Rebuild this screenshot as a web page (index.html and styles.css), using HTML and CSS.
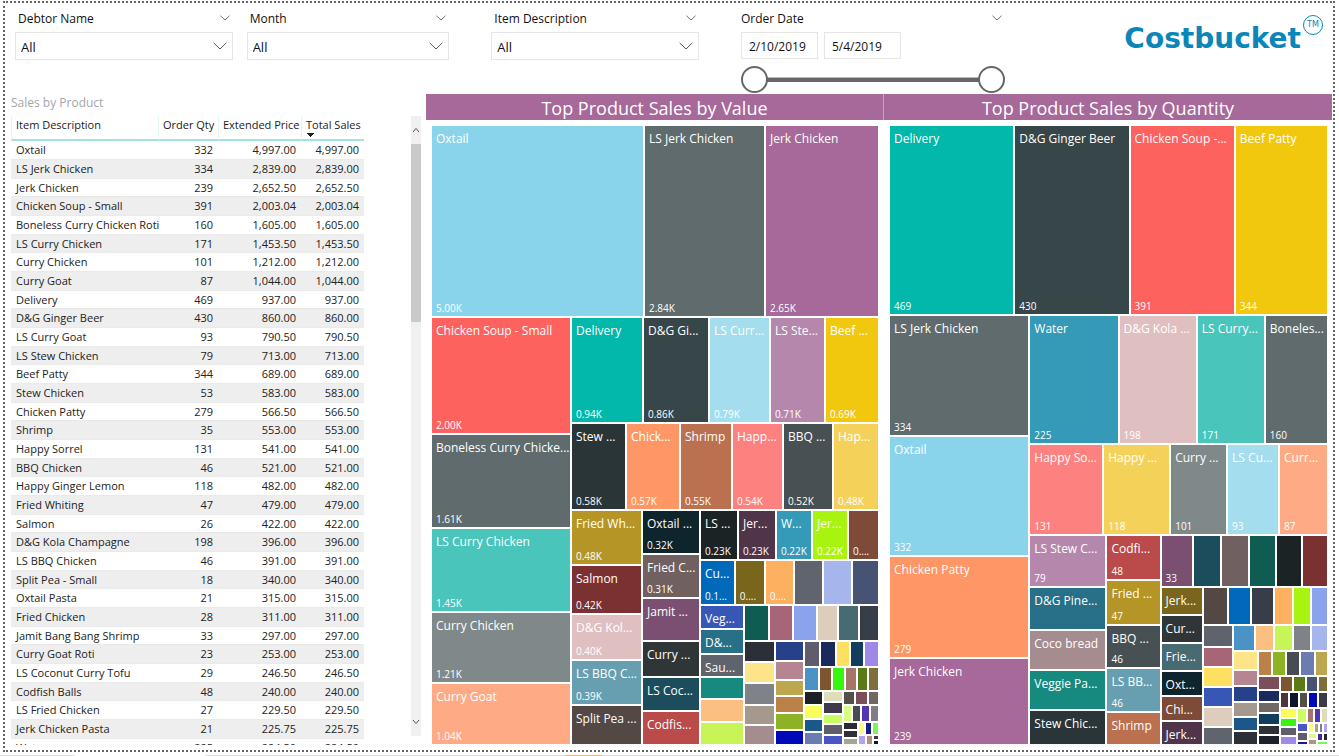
FILE: index.html
```html
<!DOCTYPE html>
<html lang="en">
<head>
<meta charset="utf-8">
<title>Costbucket Sales Report</title>
<link rel="stylesheet" href="styles.css">
</head>
<body>
<div class="report">
  <header class="filters">
    <div class="filter filter-debtor">
      <div class="filter-head"><label for="debtor">Debtor Name</label><button class="more" aria-label="Debtor Name options"><svg viewBox="0 0 10 6"><path d="M.5.8 5 5 9.500.8"/></svg></button></div>
      <div class="select"><select id="debtor"><option>All</option></select><svg viewBox="0 0 14 8"><path d="M.6.8 7 7 13.400.8"/></svg></div>
    </div>
    <div class="filter filter-month">
      <div class="filter-head"><label for="month">Month</label><button class="more" aria-label="Month options"><svg viewBox="0 0 10 6"><path d="M.5.8 5 5 9.500.8"/></svg></button></div>
      <div class="select"><select id="month"><option>All</option></select><svg viewBox="0 0 14 8"><path d="M.6.8 7 7 13.400.8"/></svg></div>
    </div>
    <div class="filter filter-item">
      <div class="filter-head"><label for="item">Item Description</label><button class="more" aria-label="Item Description options"><svg viewBox="0 0 10 6"><path d="M.5.8 5 5 9.500.8"/></svg></button></div>
      <div class="select"><select id="item"><option>All</option></select><svg viewBox="0 0 14 8"><path d="M.6.8 7 7 13.400.8"/></svg></div>
    </div>
    <div class="filter filter-date">
      <div class="filter-head"><label for="from">Order Date</label><button class="more" aria-label="Order Date options"><svg viewBox="0 0 10 6"><path d="M.5.8 5 5 9.500.8"/></svg></button></div>
      <div class="dates">
        <input id="from" type="text" value="2/10/2019">
        <input type="text" value="5/4/2019" aria-label="Order Date to">
      </div>
      <div class="range">
        <input type="range" min="0" max="100" value="0" aria-label="Range start">
        <input type="range" min="0" max="100" value="100" aria-label="Range end">
      </div>
    </div>
    <div class="brand"><span class="brand-name">Costbucket</span><span class="brand-mark">TM</span></div>
  </header>

  <main class="content">
    <section class="sales">
      <h2 class="sales-title">Sales by Product</h2>
      <div class="sales-body">
        <div class="table-clip">
          <table>
            <thead><tr><th>Item Description</th><th>Order Qty</th><th>Extended Price</th><th class="sorted">Total Sales</th></tr></thead>
            <tbody>
              <tr><td>Oxtail</td><td>332</td><td>4,997.00</td><td>4,997.00</td></tr>
              <tr><td>LS Jerk Chicken</td><td>334</td><td>2,839.00</td><td>2,839.00</td></tr>
              <tr><td>Jerk Chicken</td><td>239</td><td>2,652.50</td><td>2,652.50</td></tr>
              <tr><td>Chicken Soup - Small</td><td>391</td><td>2,003.04</td><td>2,003.04</td></tr>
              <tr><td>Boneless Curry Chicken Roti</td><td>160</td><td>1,605.00</td><td>1,605.00</td></tr>
              <tr><td>LS Curry Chicken</td><td>171</td><td>1,453.50</td><td>1,453.50</td></tr>
              <tr><td>Curry Chicken</td><td>101</td><td>1,212.00</td><td>1,212.00</td></tr>
              <tr><td>Curry Goat</td><td>87</td><td>1,044.00</td><td>1,044.00</td></tr>
              <tr><td>Delivery</td><td>469</td><td>937.00</td><td>937.00</td></tr>
              <tr><td>D&amp;G Ginger Beer</td><td>430</td><td>860.00</td><td>860.00</td></tr>
              <tr><td>LS Curry Goat</td><td>93</td><td>790.50</td><td>790.50</td></tr>
              <tr><td>LS Stew Chicken</td><td>79</td><td>713.00</td><td>713.00</td></tr>
              <tr><td>Beef Patty</td><td>344</td><td>689.00</td><td>689.00</td></tr>
              <tr><td>Stew Chicken</td><td>53</td><td>583.00</td><td>583.00</td></tr>
              <tr><td>Chicken Patty</td><td>279</td><td>566.50</td><td>566.50</td></tr>
              <tr><td>Shrimp</td><td>35</td><td>553.00</td><td>553.00</td></tr>
              <tr><td>Happy Sorrel</td><td>131</td><td>541.00</td><td>541.00</td></tr>
              <tr><td>BBQ Chicken</td><td>46</td><td>521.00</td><td>521.00</td></tr>
              <tr><td>Happy Ginger Lemon</td><td>118</td><td>482.00</td><td>482.00</td></tr>
              <tr><td>Fried Whiting</td><td>47</td><td>479.00</td><td>479.00</td></tr>
              <tr><td>Salmon</td><td>26</td><td>422.00</td><td>422.00</td></tr>
              <tr><td>D&amp;G Kola Champagne</td><td>198</td><td>396.00</td><td>396.00</td></tr>
              <tr><td>LS BBQ Chicken</td><td>46</td><td>391.00</td><td>391.00</td></tr>
              <tr><td>Split Pea - Small</td><td>18</td><td>340.00</td><td>340.00</td></tr>
              <tr><td>Oxtail Pasta</td><td>21</td><td>315.00</td><td>315.00</td></tr>
              <tr><td>Fried Chicken</td><td>28</td><td>311.00</td><td>311.00</td></tr>
              <tr><td>Jamit Bang Bang Shrimp</td><td>33</td><td>297.00</td><td>297.00</td></tr>
              <tr><td>Curry Goat Roti</td><td>23</td><td>253.00</td><td>253.00</td></tr>
              <tr><td>LS Coconut Curry Tofu</td><td>29</td><td>246.50</td><td>246.50</td></tr>
              <tr><td>Codfish Balls</td><td>48</td><td>240.00</td><td>240.00</td></tr>
              <tr><td>LS Fried Chicken</td><td>27</td><td>229.50</td><td>229.50</td></tr>
              <tr><td>Jerk Chicken Pasta</td><td>21</td><td>225.75</td><td>225.75</td></tr>
              <tr><td>Water</td><td>225</td><td>224.50</td><td>224.50</td></tr>
            </tbody>
          </table>
        </div>
        <div class="scrollbar" aria-hidden="true">
          <svg viewBox="0 0 8 6"><path d="M1 5 4 1.500 7 5"/></svg>
          <div class="scroll-thumb"></div>
          <div class="scroll-rest"></div>
          <svg viewBox="0 0 8 6"><path d="M1 1 4 4.500 7 1"/></svg>
        </div>
      </div>
    </section>
    <section class="chart chart-value">
      <h2 class="chart-title">Top Product Sales by Value</h2>
      <div class="treemap" id="by-value"></div>
    </section>
    <section class="chart chart-quantity">
      <h2 class="chart-title">Top Product Sales by Quantity</h2>
      <div class="treemap" id="by-quantity"></div>
    </section>
  </main>
</div>
<footer class="tabs" aria-hidden="true"><i class="tab"></i><i class="tab tab-open"></i><i class="tab tab-mid"></i><i class="tab tab-accent"></i><i class="tab tab-rest"></i></footer>
<script src="treemap.js"></script>
</body>
</html>
```

FILE: styles.css
```css
* { box-sizing: border-box; }
body {
  margin: 0;
  height: 100vh;
  display: flex;
  flex-direction: column;
  background: #fff;
  color: #222;
  font-family: "Open Sans", "Noto Sans", sans-serif;
  font-size: 11px;
  overflow: hidden;
}
h2 { margin: 0; font-weight: 400; }
svg { fill: none; stroke: #555; }

.report {
  flex: 1;
  min-height: 0;
  margin: 1px 4px 0 3px;
  border: 2px dotted #666;
  display: flex;
  flex-direction: column;
}

/* Filters */
.filters {
  display: flex;
  gap: 14px;
  padding: 6px 1px 0 10px;
  height: 91px;
}
.filter { min-width: 0; }
.filter-debtor { flex: 218 1 0; }
.filter-month { flex: 203 1 0; }
.filter-item { flex: 208 1 0; margin-left: 28px; }
.filter-date { flex: 264 1 0; margin-left: 28px; }
.filter-head {
  display: flex;
  justify-content: space-between;
  align-items: center;
  height: 18px;
  margin-bottom: 5px;
  padding: 0 3px;
  font-size: 12px;
  color: #111;
}
.filter-date .filter-head { padding-left: 0; }
.more {
  display: flex;
  padding: 0;
  border: 0;
  background: none;
}
.more svg { width: 10px; height: 6px; stroke: #7a6a7a; }
.select { display: grid; align-items: center; }
.select select, .select svg { grid-area: 1 / 1; }
.select select {
  appearance: none;
  width: 100%;
  height: 28px;
  padding: 2px 5px 0;
  border: 1px solid #e6e6e6;
  border-radius: 0;
  background: #fff;
  color: #111;
  font: inherit;
  font-size: 13px;
}
.select svg {
  width: 14px;
  height: 8px;
  margin-right: 6px;
  justify-self: end;
  pointer-events: none;
}
.dates { display: flex; gap: 6px; }
.dates input {
  width: 77px;
  height: 27px;
  padding: 1px 7px 0;
  border: 1px solid #e6e6e6;
  color: #111;
  font: inherit;
  font-size: 12px;
}
.range {
  display: grid;
  align-items: center;
  height: 27px;
  margin-top: 7px;
}
.range::before {
  content: "";
  grid-area: 1 / 1;
  height: 4px;
  margin: 0 20px;
  background: #666;
  border-top: 1px solid #bbb;
}
.range input {
  grid-area: 1 / 1;
  appearance: none;
  width: 100%;
  height: 27px;
  margin: 0;
  background: none;
  pointer-events: none;
}
.range input::-webkit-slider-thumb {
  appearance: none;
  width: 27px;
  height: 27px;
  border: 2px solid #666;
  border-radius: 50%;
  background: #fff;
  pointer-events: auto;
}
.brand {
  flex: 305 1 0;
  display: flex;
  justify-content: flex-end;
  align-items: flex-start;
  gap: 2px;
  padding: 6px 9px 0 0;
  color: #0a86b8;
}
.brand-name {
  padding-top: 8px;
  font: bold 28px/32px "DejaVu Sans", sans-serif;
}
.brand-mark {
  width: 20px;
  height: 20px;
  border: 1px solid #0a86b8;
  border-radius: 50%;
  font: 8px/18px "DejaVu Sans", sans-serif;
  text-align: center;
}

/* Product table */
.content { flex: 1; min-height: 0; display: flex; padding-right: 1px; }
.sales {
  flex: 410 1 0;
  min-width: 0;
  display: flex;
  flex-direction: column;
  padding: 0 5px 5px 6px;
}
.sales-title {
  height: 22px;
  font-size: 12px;
  line-height: 18px;
  color: #a6a6a6;
}
.sales-body {
  flex: 1;
  min-height: 0;
  display: flex;
  justify-content: space-between;
}
.table-clip { flex: 0 0 353px; overflow: hidden; }
table {
  width: 100%;
  table-layout: fixed;
  border-collapse: separate;
  border-spacing: 0;
  white-space: nowrap;
}
th, td { padding: 0 5px; text-align: right; font-weight: 400; }
th:first-child, td:first-child { text-align: left; }
th {
  height: 25px;
  padding: 0 4px 6px;
  border-left: 1px solid #e2f4f3;
  border-bottom: 2px solid #a3e3de;
}
th:nth-child(1) { width: 147px; }
th:nth-child(2) { width: 60px; }
th:nth-child(3) { width: 83px; }
.sorted {
  background: linear-gradient(#222, #222) 5px 17px / 7px 1px no-repeat,
    linear-gradient(#222, #222) 6px 18px / 5px 1px no-repeat,
    linear-gradient(#222, #222) 7px 19px / 3px 1px no-repeat,
    linear-gradient(#222, #222) 8px 20px / 1px 1px no-repeat;
}
td { height: 19px; line-height: 18px; border-bottom: 1px solid #eaeaea; }
tr:nth-child(3n) td { height: 18px; line-height: 17px; }
tr:nth-child(even) td { background: #eee; }
.scrollbar {
  width: 10px;
  margin-bottom: 9px;
  background: #f0f0f0;
  display: flex;
  flex-direction: column;
  align-items: center;
}
.scrollbar svg { width: 8px; height: 6px; margin: 11px 0; flex: none; }
.scroll-thumb { flex: 178 1 0; width: 100%; background: #c9c9c9; }
.scroll-rest { flex: 387 1 0; }

/* Treemaps */
.chart { min-width: 0; display: flex; flex-direction: column; }
.chart-value { flex: 457 1 0; }
.chart-quantity { flex: 449 1 0; }
.chart-title {
  height: 26px;
  background: #a66999;
  color: #fff;
  font-size: 18px;
  line-height: 28px;
  text-align: center;
}
.chart-quantity .chart-title { border-left: 1px solid #c79fbf; }
.treemap { flex: 1; min-height: 0; display: flex; padding: 6px 5px 6px 6px; }
.chart-quantity .treemap { padding-left: 7px; }
.split { display: flex; gap: 2px; min-width: 0; min-height: 0; }
.split-column { flex-direction: column; }
.tile {
  min-width: 0;
  min-height: 0;
  overflow: hidden;
  display: flex;
  flex-direction: column;
  justify-content: space-between;
  color: #fff;
  white-space: nowrap;
}
.tile-label { padding: 5px 0 0 4px; font-size: 12px; line-height: 16px; }
.tile-value { padding: 0 0 1px 4px; font-size: 10px; line-height: 14px; }

/* Page tab edge */
.tabs { display: flex; height: 1px; margin-top: 3px; }
.tab { flex: 75 1 0; background: #e0e0e0; }
.tab-open { flex-grow: 130; background: #fff; }
.tab-mid { flex-grow: 360; }
.tab-accent { flex-grow: 37; background: #f2c811; }
.tab-rest { flex-grow: 737; }
```

FILE: treemap.js
```js
// Each node is built with its share of the parent's length.
function tile(size, color, label, value) {
  const el = document.createElement("div");
  el.className = "tile";
  el.style.flex = size + " 1 0";
  el.style.backgroundColor = color;
  if (label !== undefined) {
    const name = document.createElement("span");
    name.className = "tile-label";
    name.textContent = label;
    el.append(name);
  }
  if (value) {
    const amount = document.createElement("span");
    amount.className = "tile-value";
    amount.textContent = value;
    el.append(amount);
  }
  return el;
}
function split(kind, size, children) {
  const el = document.createElement("div");
  el.className = "split split-" + kind;
  el.style.flex = size + " 1 0";
  el.append(...children);
  return el;
}
const row = (size, ...children) => split("row", size, children);
const col = (size, ...children) => split("column", size, children);
// Unlabelled tiles, written as "size color" pairs.
const plain = (text) => text.split(",").map((pair) => tile(...pair.trim().split(" ")));
const rowOf = (size, text) => row(size, ...plain(text));
const colOf = (size, text) => col(size, ...plain(text));

// Sales by value, from the smallest corner outwards.
const valueSmallest = row(21,
  colOf(13, "6 #2a2938,5 #303137,5 #a3a68f"),
  col(19,
    rowOf(10, "6 #fafd82,5 #181c87,5 #7bf658"),
    row(8, ...plain("7 #b3a2ee,5 #b69080"), colOf(4, "3 #50343d,3 #101529"))
  )
);
const valueSmall = row(52,
  colOf(17, "12 #1c1f25,11 #f9fd59,11 #1b5889,11 #6b7cb1"),
  colOf(17, "9 #dedcbb,9 #3d3a4a,8 #c9fd63,8 #5f5d6c,8 #4a54c5"),
  col(34,
    rowOf(12, "10 #535048,10 #7b4e5a,9 #706862"),
    rowOf(15, "7 #d9fc86,7 #474b53,6 #5435b5,7 #7f7d88"),
    valueSmallest
  )
);
const valueLower = row(102,
  colOf(29, "19 #2a2f38,19 #fee489,19 #7f8389,18 #a5998d,18 #a58c8e"),
  colOf(27, "18 #264189,17 #b68592,15 #bca64f,15 #bb8149,15 #8db225,13 #0009b8"),
  col(73,
    rowOf(24, "14 #5f5d6c,14 #1b2a5c,13 #fee061,12 #123d5c,13 #a088e9"),
    rowOf(22, "13 #4b92c5,11 #7d5631,10 #38f510,10 #a67468,9 #5b7917,9 #7e6e37"),
    valueSmall
  )
);
const valueMiddle = col(177,
  row(48,
    tile(36, "#1c2325", "LS ...", "0.23K"),
    tile(36, "#50344a", "Jer...", "0.23K"),
    tile(34, "#3599b8", "W...", "0.22K"),
    tile(34, "#a9f310", "Jer...", "0.22K"),
    tile(29, "#7d4b37", "", "0....")
  ),
  row(43,
    tile(33, "#0069b9", "Cu...", "0.1..."),
    tile(28, "#79651b", "", "0...."),
    tile(28, "#fdb05f", "", "0...."),
    ...plain("27 #5f646d,27 #a6b5eb,25 #465373")
  ),
  row(138,
    col(42,
      tile(22, "#3757b7", "Veg..."),
      tile(23, "#277087", "D&..."),
      tile(21, "#5e636c", "Sau..."),
      ...plain("21 #178a7f,21 #fbbf82,21 #c7f456")
    ),
    col(132,
      rowOf(34, "23 #0f5c53,22 #a66678,22 #8ba2ec,19 #dccdbd,19 #476a73,18 #373d49"),
      valueLower
    )
  )
);
const valueRight = col(306,
  row(104,
    tile(70, "#01b8aa", "Delivery", "0.94K"),
    tile(64, "#374649", "D&G Gi...", "0.86K"),
    tile(59, "#a4ddee", "LS Curr...", "0.79K"),
    tile(53, "#b687ac", "LS Ste...", "0.71K"),
    tile(52, "#f2c80f", "Beef ...", "0.69K")
  ),
  row(85,
    tile(53, "#293537", "Stew ...", "0.58K"),
    tile(52, "#fe9666", "Chick...", "0.57K"),
    tile(50, "#bb714f", "Shrimp", "0.55K"),
    tile(49, "#fd817e", "Happ...", "0.54K"),
    tile(48, "#475052", "BBQ ...", "0.52K"),
    tile(44, "#f4d25a", "Hap...", "0.48K")
  ),
  row(233,
    col(69,
      tile(53, "#b59525", "Fried Wh...", "0.48K"),
      tile(47, "#7b3031", "Salmon", "0.42K"),
      tile(44, "#dfbfbf", "D&G Kol...", "0.40K"),
      tile(43, "#689fb0", "LS BBQ C...", "0.39K"),
      tile(38, "#544845", "Split Pea ...")
    ),
    col(56,
      tile(42, "#0f252d", "Oxtail ...", "0.32K"),
      tile(42, "#706060", "Fried C...", "0.31K"),
      tile(40, "#7b4f71", "Jamit ..."),
      tile(34, "#303637", "Curry ..."),
      tile(32, "#1b4d5c", "LS Coc..."),
      tile(32, "#bb4a4a", "Codfis...")
    ),
    valueMiddle
  )
);
document.getElementById("by-value").append(col(1,
  row(190,
    tile(211, "#8ad4eb", "Oxtail", "5.00K"),
    tile(119, "#5f6b6d", "LS Jerk Chicken", "2.84K"),
    tile(112, "#a66999", "Jerk Chicken", "2.65K")
  ),
  row(426,
    col(138,
      tile(115, "#fd625e", "Chicken Soup - Small", "2.00K"),
      tile(92, "#5f6b6d", "Boneless Curry Chicke...", "1.61K"),
      tile(82, "#4ac5bb", "LS Curry Chicken", "1.45K"),
      tile(69, "#7f898a", "Curry Chicken", "1.21K"),
      tile(60, "#feab85", "Curry Goat", "1.04K")
    ),
    valueRight
  )
));

// Sales by quantity, from the smallest corner outwards.
const quantitySmallest = row(20,
  colOf(10, "7 #4a54c5,7 #5f5d6c,2 #181c87"),
  col(19,
    rowOf(8, "4 #fafd82,3 #a3a68f,3 #7f7d88,3 #b3a2ee"),
    row(11,
      colOf(8, "5 #d9fc86,4 #b69080"),
      col(10, rowOf(7, "4 #42298a,4 #2a2938"), tile(2, "#7bf658"))
    )
  )
);
const quantitySmall = row(67,
  colOf(20, "13 #7b4e5a,10 #1b2a5c,10 #706862,10 #123d5c,9 #303137,8 #1c1f25"),
  col(46,
    rowOf(14, "11 #7d5631,11 #5b7917,11 #465373,8 #7e6e37"),
    rowOf(14, "7 #50343d,8 #101529,7 #535048,8 #0009b8,8 #3d3a4a"),
    row(35,
      colOf(15, "8 #f9fd59,7 #38f510,7 #5f5d6c,7 #a088e9"),
      col(30, rowOf(13, "9 #c9fd63,5 #a67468,5 #5435b5,5 #dedcbb"), quantitySmallest)
    )
  )
);
const quantityLower = row(118,
  colOf(28, "20 #5e636c,18 #a66678,18 #fee061,18 #3757b7,18 #dccdbd,16 #5f646d"),
  col(93,
    rowOf(24, "20 #4b92c5,17 #fbbf82,17 #c7f456,16 #7f8389,15 #a6b5eb"),
    row(92,
      colOf(23, "17 #fee489,14 #b68592,14 #264189,13 #a5998d,12 #1b5889,12 #2a2f38"),
      col(68, rowOf(23, "12 #bb8149,12 #8db225,12 #474b53,13 #6b7cb1,11 #bca64f"), quantitySmall)
    )
  )
);
const quantityMiddle = col(165,
  row(50,
    tile(30, "#7b4f71", "", "33"),
    ...plain("26 #1b4d5c,26 #706060,25 #0f5c53,24 #1c2325,24 #7b3031")
  ),
  row(156,
    col(41,
      tile(26, "#79651b", "Jerk..."),
      tile(26, "#303637", "Cur..."),
      tile(25, "#476a73", "Frie..."),
      tile(23, "#0f252d", "Oxt..."),
      tile(23, "#7d4b37", "Chi..."),
      tile(22, "#50344a", "Jerk...")
    ),
    col(123,
      rowOf(36, "23 #544845,21 #0069b9,21 #373d49,18 #fdb05f,16 #a9f310,15 #8ba2ec"),
      quantityLower
    )
  )
);
const quantityRight = col(296,
  row(127,
    tile(87, "#3599b8", "Water", "225"),
    tile(76, "#dfbfbf", "D&G Kola ...", "198"),
    tile(66, "#4ac5bb", "LS Curry...", "171"),
    tile(61, "#5f6b6d", "Boneles...", "160")
  ),
  row(89,
    tile(72, "#fd817e", "Happy So...", "131"),
    tile(65, "#f4d25a", "Happy ...", "118"),
    tile(55, "#7f898a", "Curry ...", "101"),
    tile(50, "#a4ddee", "LS Cu...", "93"),
    tile(47, "#feab85", "Curr...", "87")
  ),
  row(208,
    col(75,
      tile(50, "#b687ac", "LS Stew C...", "79"),
      tile(41, "#277087", "D&G Pine..."),
      tile(38, "#a58c8e", "Coco bread"),
      tile(38, "#178a7f", "Veggie Pa..."),
      tile(33, "#293537", "Stew Chic...")
    ),
    col(52,
      tile(43, "#bb4a4a", "Codfi...", "48"),
      tile(43, "#b59525", "Fried ...", "47"),
      tile(41, "#475052", "BBQ ...", "46"),
      tile(42, "#689fb0", "LS BB...", "46"),
      tile(31, "#bb714f", "Shrimp")
    ),
    quantityMiddle
  )
);
document.getElementById("by-quantity").append(col(1,
  row(188,
    tile(123, "#01b8aa", "Delivery", "469"),
    tile(113, "#374649", "D&G Ginger Beer", "430"),
    tile(103, "#fd625e", "Chicken Soup -...", "391"),
    tile(91, "#f2c80f", "Beef Patty", "344")
  ),
  row(428,
    col(138,
      tile(119, "#5f6b6d", "LS Jerk Chicken", "334"),
      tile(119, "#8ad4eb", "Oxtail", "332"),
      tile(100, "#fe9666", "Chicken Patty", "279"),
      tile(85, "#a66999", "Jerk Chicken", "239")
    ),
    quantityRight
  )
));
```
